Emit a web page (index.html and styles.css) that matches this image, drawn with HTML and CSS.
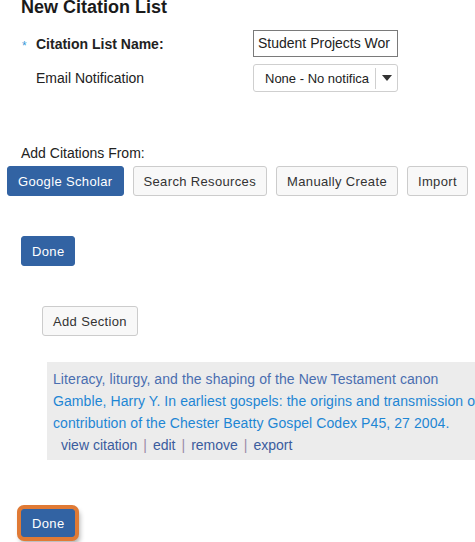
FILE: index.html
```html
<!DOCTYPE html>
<html>
<head>
<meta charset="utf-8">
<link rel="stylesheet" href="styles.css">
</head>
<body>
<div class="page">
  <h1 class="title">New Citation List</h1>
  <div class="form">
    <span class="req">*</span>
    <label class="label strong">Citation List Name:</label>
    <div class="input">Student Projects Wor</div>
    <span></span>
    <label class="label">Email Notification</label>
    <div class="select">
      <span class="select-text">None - No notifica</span>
      <span class="select-arrow"><span class="tri"></span></span>
    </div>
  </div>
  <div class="add-label">Add Citations From:</div>
  <div class="btn-row">
    <button class="btn primary">Google Scholar</button>
    <button class="btn">Search Resources</button>
    <button class="btn">Manually Create</button>
    <button class="btn">Import</button>
  </div>
  <button class="btn primary done">Done</button>
  <button class="btn add-section">Add Section</button>
  <div class="citation">
    <div class="cit-title">Literacy, liturgy, and the shaping of the New Testament canon</div>
    <div class="cit-body">
      <span class="cit-line">Gamble, Harry Y. In earliest gospels: the origins and transmission of the earliest Christian Gospels--the</span>
      <span class="cit-line">contribution of the Chester Beatty Gospel Codex P45, 27 2004.</span>
    </div>
    <div class="cit-links">
      <a class="lnk">view citation</a><span class="sep">|</span><a class="lnk">edit</a><span class="sep">|</span><a class="lnk">remove</a><span class="sep">|</span><a class="lnk">export</a>
    </div>
  </div>
  <button class="btn primary done focused">Done</button>
</div>
</body>
</html>
```
FILE: styles.css
```css
html, body {
  margin: 0;
  padding: 0;
  overflow: hidden;
  background: #fff;
}
body {
  font-family: "Liberation Sans", Arial, sans-serif;
  color: #222;
  width: 475px;
  height: 542px;
}
.page {
  display: flex;
  flex-direction: column;
  align-items: flex-start;
  margin-top: -3px;
}
.title {
  font-size: 18px;
  line-height: 20px;
  font-weight: bold;
  margin: 0 0 0 21px;
  color: #1a1a1a;
}
.form {
  display: grid;
  grid-template-columns: 15px 217px 145px;
  grid-auto-rows: auto;
  row-gap: 7px;
  align-items: center;
  margin: 13px 0 0 21px;
}
.req {
  color: #3a9ad9;
  font-size: 12px;
  line-height: 12px;
  padding-left: 1px;
  margin-top: 4px;
}
.label {
  font-size: 14px;
  line-height: 16px;
  color: #222;
}
.label.strong {
  font-weight: bold;
}
.input {
  box-sizing: border-box;
  height: 27px;
  border: 1px solid #7a7a7a;
  font-size: 14px;
  line-height: 25px;
  padding-left: 4px;
  white-space: nowrap;
  overflow: hidden;
  color: #222;
}
.select {
  box-sizing: border-box;
  height: 28px;
  border: 1px solid #cfcfcf;
  border-radius: 3px;
  display: flex;
  align-items: center;
  background: #fff;
}
.select-text {
  flex: 1;
  font-size: 13px;
  padding-left: 11px;
  white-space: nowrap;
  overflow: hidden;
  color: #222;
  border-right: 1px solid #cfcfcf;
  height: 21px;
  line-height: 21px;
}
.select-arrow {
  width: 21px;
  display: flex;
  justify-content: center;
  align-items: center;
}
.tri {
  width: 0;
  height: 0;
  border-left: 5px solid transparent;
  border-right: 5px solid transparent;
  border-top: 6px solid #333;
}
.add-label {
  font-size: 14px;
  line-height: 16px;
  margin: 53px 0 0 21px;
  color: #222;
}
.btn-row {
  display: flex;
  gap: 9px;
  margin: 5px 0 0 7px;
}
.btn {
  box-sizing: border-box;
  height: 30px;
  padding: 0 10px;
  font-family: "Liberation Sans", Arial, sans-serif;
  font-size: 13px;
  letter-spacing: 0.35px;
  color: #333;
  background: #f8f8f8;
  border: 1px solid #cccccc;
  border-radius: 3px;
  white-space: nowrap;
}
.btn.primary {
  background: #3263a3;
  border-color: #3263a3;
  color: #fff;
}
.done {
  margin: 40px 0 0 21px;
}
.add-section {
  margin: 40px 0 0 42px;
}
.citation {
  margin: 26px 0 0 47px;
  width: 700px;
  background: #ececec;
  padding: 6px 6px 4px 6px;
  font-size: 14px;
  line-height: 22px;
  letter-spacing: 0.08px;
}
.cit-title {
  color: #4a6eb0;
  white-space: nowrap;
}
.cit-line {
  display: block;
  color: #1e86d4;
  white-space: nowrap;
}
.cit-links {
  padding-left: 8px;
  color: #3b5c9e;
  letter-spacing: 0;
}
.lnk {
  color: #3b5c9e;
}
.sep {
  color: #9a8aa8;
  margin: 0 6px;
}
.focused {
  margin-top: 49px;
  height: 28px;
  box-shadow: 0 0 0 4px #e07a35, 2px 4px 5px 3px rgba(0,0,0,0.3);
}
```
